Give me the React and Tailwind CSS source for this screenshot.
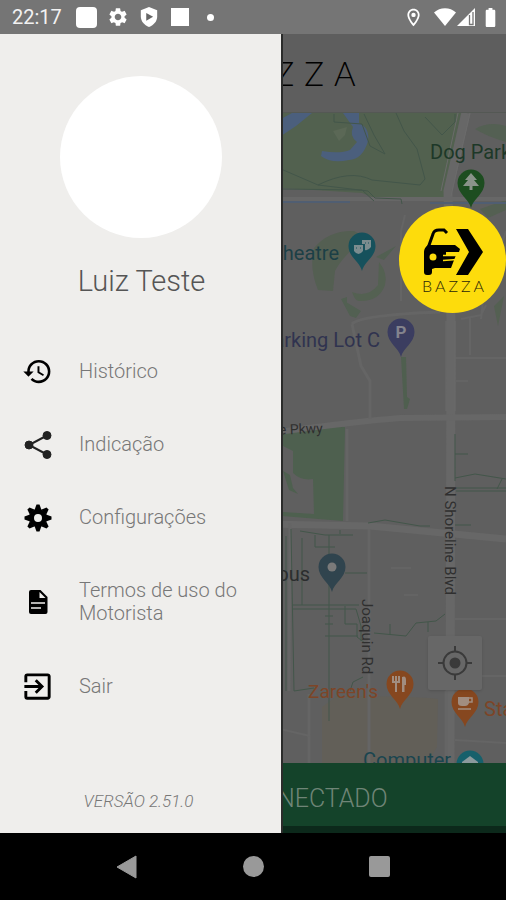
import React from "react";
import {
  MdBatteryFull,
  MdExitToApp,
  MdHistory,
  MdOutlineLocationOn,
  MdSettings,
} from "react-icons/md";

function StatusBar() {
  return (
    <header className="flex h-[34px] shrink-0 items-center justify-between bg-[#757575] pl-3 pr-1 text-white">
      <div className="flex items-center">
        <time className="w-16 text-xl leading-6 text-[#f2f2f2]">22:17</time>
        <span className="h-[21px] w-[21px] rounded-sm bg-white" />
        <MdSettings className="ml-2.5 h-[22px] w-[22px]" />
        <svg viewBox="0 0 20 22" className="ml-2.5 h-[20px] w-[20px]" aria-hidden="true">
          <path d="M10 0l9 3.500v7c0 5.200-3.700 9.500-9 11.500c-5.300-2-9-6.300-9-11.500v-7z" fill="#fff" />
          <path d="M7 6.500l7.500 4.300L7 15z" fill="#666" />
        </svg>
        <span className="ml-3 h-[18px] w-[18px] bg-white" />
        <span className="ml-[18px] h-[7px] w-[7px] rounded-full bg-white" />
      </div>
      <div className="flex items-center">
        <MdOutlineLocationOn className="mr-2.5 h-[21px] w-[21px]" />
        <svg viewBox="0 0 22 18" className="h-[18px] w-[22px]" aria-hidden="true">
          <path d="M0 4.500C6-1.200 16-1.200 22 4.500L11 18z" fill="#fff" />
        </svg>
        <svg viewBox="0 0 18 18" className="ml-px h-[18px] w-[18px]" aria-hidden="true">
          <path d="M0 18L18 0v18z" fill="#fff" />
          <path d="M12.500 7v9.500h3.500V4" fill="none" stroke="#757575" strokeWidth="1.300" />
        </svg>
        <MdBatteryFull className="ml-1 h-[23px] w-[23px]" />
      </div>
    </header>
  );
}

function Pin({ x, y, color, children }) {
  return (
    <g transform={`translate(${x} ${y})`}>
      <path d="M0 25C-2 16-13.500 11-13.500 0a13.500 13.500 0 0 1 27 0C13.500 11 2 16 0 25z" fill={color} />
      {children}
    </g>
  );
}

function MapView() {
  return (
    <svg
      viewBox="0 112 506 651"
      preserveAspectRatio="xMaxYMin slice"
      className="absolute inset-0 h-full w-full font-[Roboto,sans-serif]"
      role="img"
      aria-label="Mapa"
    >
      <rect y="112" width="506" height="651" fill="#5f5f5f" />

      {/* parks and water */}
      <path d="M0 112H461L453 150L444 198L375 197L362 192L282 187H0z" fill="#52614f" />
      <path d="M475 128q14-8 31-3v16q-20-6-31-13z" fill="#546053" />
      <path d="M281 135V118L292 112H312L296 125z" fill="#4b5f7d" />
      <path d="M343 112h16v10q11 5 9 18q-5 18-19 19q-18 4-28-4l1-5q18 3 28-1l7-8q-8-6-4-15z" fill="#4b5f7d" />
      <path d="M333 130l14-4l-2 8l-6 6z" fill="#5b6856" />
      <path d="M283 427l62-1l-2 94l-61-5z" fill="#4e604f" />
      <path d="M283 445l10 5v22q8 8 20 6l1 35l-31-2z" fill="#5f5f5f" />
      <path d="M283 470l7 4l3 13l5 6l-9-4z" fill="#4e604f" />
      <path d="M314 247q15-18 40-17l12 6q-24 20-31 34l-2 20l-15-1q-9-22-4-42z" fill="#545f52" />
      <path d="M379 261q9 11 6 23q-6 17-26 16q-4 0-7-9q16 6 26-7z" fill="#546152" />
      <path d="M376 256l20-11l-12 14zM341 298l20 12l-5 7l-6-2zM341 298l6-2v8z" fill="#526052" />
      <path d="M401 356h5l1 40l3 2l-3 10h-3z" fill="#4f5f4f" />
      <path d="M322 706l15-11q80 0 101 3l-1 48l-10 17H322z" fill="#625f58" />
      <path d="M480 208l26-9v10l-18 8zM494 305l10-10l-6 30z" fill="#546052" />

      {/* roads */}
      <g fill="none" stroke="#676767">
        <path d="M466 112L448 190L451 320L450 763" strokeWidth="9" />
        <path d="M0 198H506" strokeWidth="4" />
        <path d="M270 432Q360 420 400 417L506 416" strokeWidth="6" />
        <path d="M0 518L370 525L506 538" strokeWidth="7" />
      </g>
      <g fill="none" stroke="#656565">
        <path d="M369 528V763" strokeWidth="3" />
        <path d="M290 522L289 690M347 428V520M309 693V763M446 690V760" strokeWidth="3" />
        <path d="M352 323L361 365L370 380V418M352 323Q360 314 440 311" strokeWidth="3" />
        <path d="M405 214L401 230V300M455 357H506M470 316V354M455 618H506M482 675H506M280 728L310 735M455 739L506 742" strokeWidth="2" />
        <path d="M506 230L483 300L481 318M461 318l20-4l5-10" strokeWidth="2" />
      </g>
      <g fill="none" stroke="#6b6b6b" strokeWidth="1">
        <path d="M458 112L441 190M470 112L451 195M446 320V410M455 320V410" />
        <path d="M391 567h20M404 594h14M456 380h12" />
      </g>
      <path d="M0 201H350M430 202H506" fill="none" stroke="#505e72" strokeWidth="2" />

      {/* trails */}
      <g fill="none" stroke="#43564a" strokeWidth="1">
        <path d="M281 168L318 184L368 190L375 197L401 198L402 203M281 188L362 189L374 200M318 184Q350 168 372 179L420 184L425 178L417 148L404 130L396 112" />
        <path d="M334 113v8L362 123L370 145L385 153L374 134L364 113M425 116L442 134L455 121V113" />
        <path d="M368 522L385 519L420 525L430 525M455 433V480M455 453h13M455 477L475 473L506 478M456 487H506M456 490H506M497 488L502 478M455 524h16" />
        <path d="M300 530l25 4h28M340 533v-4M315 534v12h20M302 537V604M292 608H356L361 625V640M329 534V720M292 604H359M345 605v18h12v13l8 6M325 635H358M374 632L406 635L416 622L436 620L445 613M390 623v11M428 621v10M325 615h8M325 623h8M345 572h22" />
        <path d="M291 528L294 690L314 687M350 690l3-9l10-5M286 535V690" />
      </g>

      {/* place pins */}
      <Pin x={471} y={182} color="#1d4d20">
        <path d="M0-10l6 7H3l5 6H1.500v4h-3V3H-8l5-6h-3z" fill="#8a938a" />
      </Pin>
      <Pin x={362} y={245} color="#16515c">
        <path d="M-8-1h9v6q-4.500 6-9 0zM0-6h9v7q-3 4-6 3v-6h-3z" fill="#7b8c8f" />
        <path d="M-6 2h1M-2 2h1M3-3h1M6-3h1" stroke="#16515c" />
      </Pin>
      <Pin x={401} y={331} color="#3b3d60">
        <text y="6" textAnchor="middle" fontSize="17" fontWeight="700" fill="#83838d">P</text>
      </Pin>
      <Pin x={332} y={566} color="#30444e">
        <circle r="4.500" fill="#7a7a7a" />
      </Pin>
      <Pin x={400} y={683} color="#86471f">
        <path d="M-7-8v6h6v-6M-4-8V8" fill="none" stroke="#a18d80" strokeWidth="2" />
        <path d="M2 8V-7q4-2 4 3v5H4.500v7z" fill="#a18d80" />
      </Pin>
      <Pin x={465} y={701} color="#86471f">
        <path d="M-7-5H4V1q-1 3-4 3h-3q-4 0-4-3z" fill="#a18d80" />
        <path d="M4-4h3v4H4M-7 7H6" fill="none" stroke="#a18d80" strokeWidth="1.500" />
      </Pin>
      <Pin x={470} y={763} color="#16606b">
        <path d="M-8-2l8-6l8 6v2H-8z" fill="#8b9a9c" />
      </Pin>

      {/* labels */}
      <g fontSize="20">
        <text x="430" y="158" fill="#1d3828">Dog Park</text>
        <text x="339" y="259" textAnchor="end" fill="#1c3f46">Amphitheatre</text>
        <text x="380" y="346" textAnchor="end" fill="#30334f">Parking Lot C</text>
        <text x="310" y="580" textAnchor="end" fill="#2b2d2e">Campus</text>
        <text x="308" y="697" fill="#7d4527" fontSize="19">Zareen's</text>
        <text x="484" y="715" fill="#7d4527">Starbucks</text>
        <text x="363" y="766" fill="#1a454f">Computer</text>
      </g>
      <g fontSize="15" fill="#2f2f2f">
        <text transform="translate(323 432) rotate(-2)" textAnchor="end" fontSize="14">Amphitheatre Pkwy</text>
        <text transform="translate(445 485) rotate(90)">N Shoreline Blvd</text>
        <text transform="translate(362 598) rotate(90)">Joaquin Rd</text>
      </g>
    </svg>
  );
}

function BazzaBubble() {
  return (
    <button
      type="button"
      aria-label="Bazza"
      className="absolute right-0 top-[93px] flex h-[107px] w-[107px] flex-col items-center rounded-full bg-[#fddc0c] pt-[22px] text-black"
    >
      <svg viewBox="0 0 60 48" className="h-[48px] w-[60px]" aria-hidden="true">
        <path d="M5 20L10 6Q11 2 16 2H21L24 5" fill="none" stroke="#000" strokeWidth="3" />
        <path d="M33 1H45L60 24L45 47H33L46 24z" />
        <path d="M5 17H32L37 21L36 24H23V27H33L28 40H12L9 41V44Q9 47 6 47H4Q1 47 1 44V24Q1 20 5 17z" />
        <circle cx="10" cy="29" r="3.500" fill="#fddc0c" />
        <path d="M20 27.500H38M20 32.500L34 31.500" stroke="#fddc0c" strokeWidth="1.500" />
      </svg>
      <span className="pl-1 font-[Lato,sans-serif] text-base font-light leading-5 tracking-[3px] text-[#2b2608]">
        BAZZA
      </span>
    </button>
  );
}

function ShareIcon() {
  return (
    <svg viewBox="0 0 28 28" className="h-7 w-7" fill="#222" stroke="#222" aria-hidden="true">
      <path d="M23 4.500L5 14L23 23.500" fill="none" strokeWidth="2" />
      <circle cx="5" cy="14" r="4" />
      <circle cx="23" cy="4.500" r="4" />
      <circle cx="23" cy="23.500" r="4" />
    </svg>
  );
}

const TEETH = [0, 45, 90, 135, 180, 225, 270, 315];

function GearIcon() {
  return (
    <svg viewBox="-14 -14 28 28" className="h-7 w-7" aria-hidden="true">
      {TEETH.map((angle) => (
        <path key={angle} d="M-3.500-8L-1.500-13.500H1.500L3.500-8z" transform={`rotate(${angle})`} />
      ))}
      <circle r="6.500" fill="none" stroke="#000" strokeWidth="5" />
    </svg>
  );
}

function DocumentIcon() {
  return (
    <svg viewBox="0 0 28 28" className="h-7 w-7" aria-hidden="true">
      <path d="M7 2H16.500L23.500 9V24Q23.500 26 21.500 26H7Q5 26 5 24V4Q5 2 7 2z" />
      <path d="M15.500 4V10H21.500z" fill="#efeeec" />
      <path d="M7 15H21M7 20H17" stroke="#efeeec" strokeWidth="1.600" />
    </svg>
  );
}

const MENU = [
  { label: "Histórico", icon: <MdHistory className="h-[31px] w-[31px]" /> },
  { label: "Indicação", icon: <ShareIcon /> },
  { label: "Configurações", icon: <GearIcon /> },
  { label: "Termos de uso do Motorista", icon: <DocumentIcon /> },
  { label: "Sair", icon: <MdExitToApp className="h-[35px] w-[35px]" /> },
];

function Drawer() {
  return (
    <aside className="absolute inset-y-0 left-0 flex w-[283px] flex-col items-center border-r-2 border-[#2b2c2b] bg-[#efeeec] pb-5 pt-[42px]">
      <div className="h-[162px] w-[162px] shrink-0 rounded-full bg-white" />
      <h1 className="mt-6 pl-0.5 text-[29px] font-light leading-[38px] text-[#555]">Luiz Teste</h1>
      <nav className="mt-[60px] w-full">
        <ul className="flex flex-col gap-[50px]">
          {MENU.map(({ label, icon }) => (
            <li key={label}>
              <a href="#" className="flex items-center pl-5 pr-8 text-[20px] font-light leading-[23px] text-[#777]">
                <span className="mr-6 flex h-[23px] w-[35px] shrink-0 items-center justify-center text-black">
                  {icon}
                </span>
                {label}
              </a>
            </li>
          ))}
        </ul>
      </nav>
      <p className="mt-auto pr-1 text-[17px] font-light italic leading-6 text-[#777]">VERSÃO 2.51.0</p>
    </aside>
  );
}

function NavigationBar() {
  return (
    <nav className="flex h-[67px] shrink-0 items-center justify-center gap-[105px] bg-black">
      <button type="button" aria-label="Voltar">
        <svg viewBox="0 0 22 24" className="h-6 w-[22px]" aria-hidden="true">
          <path d="M1 12L20 1V23z" fill="#999" stroke="#999" strokeLinejoin="round" />
        </svg>
      </button>
      <button type="button" aria-label="Início" className="h-[21px] w-[21px] rounded-full bg-[#999]" />
      <button type="button" aria-label="Recentes" className="h-[21px] w-[21px] rounded-xs bg-[#999]" />
    </nav>
  );
}

export default function App() {
  return (
    <div className="flex h-screen flex-col overflow-hidden bg-black font-[Roboto,sans-serif]">
      <StatusBar />
      <main className="relative flex min-h-0 flex-1 flex-col overflow-hidden">
        <div className="flex h-[78px] shrink-0 items-center justify-center bg-[#5e5e5e] pl-[72px]">
          <span className="font-[Lato,sans-serif] text-[33px] font-light leading-10 tracking-[10px] text-black">
            BAZZA
          </span>
        </div>
        <section className="relative min-h-0 flex-1 overflow-hidden border-t border-[#545854]">
          <MapView />
          <BazzaBubble />
          <button
            type="button"
            aria-label="Minha localização"
            className="absolute bottom-[73px] right-6 flex h-[54px] w-[54px] items-center justify-center rounded-xs bg-[#676767] shadow"
          >
            <svg viewBox="-17 -17 34 34" className="h-[34px] w-[34px]" fill="none" stroke="#3a3a3a" strokeWidth="2" aria-hidden="true">
              <circle r="11.500" />
              <circle r="4.500" fill="#3a3a3a" />
              <path d="M0-17v6M0 17v-6M-17 0h6M17 0h-6" />
            </svg>
          </button>
        </section>
        <button
          type="button"
          className="h-[70px] shrink-0 border-b-[7px] border-[#0c291b] bg-[#14432a] pl-20 pt-2 text-[25px] font-light leading-8 text-[#6f8577]"
        >
          DESCONECTADO
        </button>
        <Drawer />
      </main>
      <NavigationBar />
    </div>
  );
}
